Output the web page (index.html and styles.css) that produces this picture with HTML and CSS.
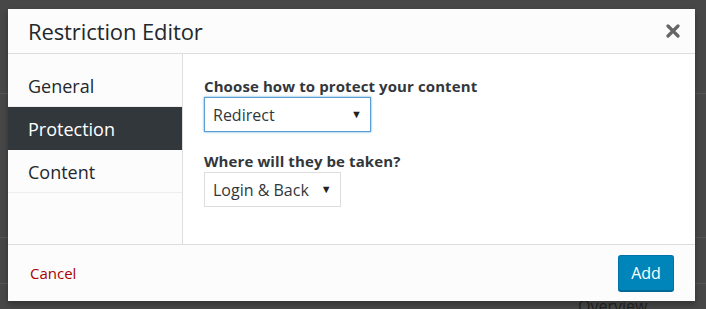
FILE: index.html
```html
<!DOCTYPE html>
<html>
	<head>
		<meta charset="UTF-8">
		<title>Restriction Editor</title>
		<link rel="stylesheet" href="styles.css">
	</head>
	<body>
		<div class="backdrop">
			<div class="bg-line line-1"></div>
			<div class="bg-line line-2"></div>
			<div class="bg-line line-3"></div>
			<span class="bg-text">Overview</span>
		</div>
		<div class="modal">
			<div class="modal-head">
				<h1 class="modal-title">Restriction Editor</h1>
				<svg class="modal-close" width="14" height="14" viewBox="0 0 14 14">
					<path d="M2 2 L12 12 M12 2 L2 12" stroke="#666" stroke-width="3.2" stroke-linecap="round"/>
				</svg>
			</div>
			<div class="modal-body">
				<ul class="tabs">
					<li class="tab">General</li>
					<li class="tab active">Protection</li>
					<li class="tab">Content</li>
				</ul>
				<div class="panel">
					<div class="field">
						<label class="field-label">Choose how to protect your content</label>
						<div class="select select-focus">
							<span>Redirect</span>
							<span class="arrow">&#9660;</span>
						</div>
					</div>
					<div class="field">
						<label class="field-label">Where will they be taken?</label>
						<div class="select">
							<span>Login &amp; Back</span>
							<span class="arrow">&#9660;</span>
						</div>
					</div>
				</div>
			</div>
			<div class="modal-foot">
				<a class="cancel">Cancel</a>
				<span class="btn-add">Add</span>
			</div>
		</div>
	</body>
</html>
```

FILE: styles.css
```css
* {
	padding: 0;
	margin: 0;
	box-sizing: border-box;
}
html,body {
	height: 100%;
}
body {
	background: #474747;
	font-family: "Open Sans", "Noto Sans", sans-serif;
	color: #23282d;
	overflow: hidden;
	position: relative;
	padding: 9px 0 0 8px;
}
/*背景里的页面*/
.backdrop {
	position: absolute;
	left: 0;
	top: 0;
	width: 100%;
	height: 100%;
}
.bg-line {
	position: absolute;
	left: 0;
	width: 100%;
	height: 1px;
	background: #555;
}
.line-1 { top: 93px; }
.line-2 { top: 237px; }
.line-3 { top: 283px; }
.bg-text {
	position: absolute;
	left: 578px;
	top: 295px;
	font-size: 16px;
	color: #222;
}
.modal {
	position: relative;
	width: 687px;
	height: 292px;
	background: #fff;
	display: flex;
	flex-direction: column;
	box-shadow: 0 3px 6px rgba(0,0,0,0.3);
}
.modal-head {
	height: 45px;
	background: #fcfcfc;
	border-bottom: 1px solid #ddd;
	display: flex;
	align-items: center;
	justify-content: space-between;
	padding: 0 15px 0 20px;
}
.modal-title {
	font-size: 22px;
	font-weight: 400;
	letter-spacing: -0.1px;
	margin-top: -1px;
}
.modal-close {
	display: block;
	margin-top: -1px;
}
.modal-body {
	flex: 1;
	display: flex;
	border-bottom: 1px solid #ddd;
}
.tabs {
	list-style: none;
	width: 175px;
	background: #fcfcfc;
	border-right: 1px solid #ddd;
	padding-top: 10px;
}
.tab {
	height: 43px;
	line-height: 44px;
	border-bottom: 1px solid #eee;
	padding-left: 20px;
	font-size: 18px;
	color: #23282d;
}
.tab.active {
	background: #32373c;
	color: #fff;
	border-bottom-color: #32373c;
}
.panel {
	flex: 1;
	padding: 22px 20px 0 21px;
}
.field {
	margin-bottom: 19px;
}
.field-label {
	display: block;
	font-size: 15px;
	font-weight: bold;
	color: #32373c;
	line-height: 20px;
	margin-bottom: 1px;
	letter-spacing: 0.1px;
}
.select {
	display: inline-flex;
	align-items: center;
	justify-content: space-between;
	height: 35px;
	border: 1px solid #ddd;
	padding: 0 8px 0 8px;
	font-size: 16px;
	color: #32373c;
	background: #fff;
}
.select-focus {
	width: 167px;
	border-color: #5b9dd9;
	box-shadow: 0 0 2px rgba(30,140,190,0.8);
}
.arrow {
	font-size: 11px;
	color: #222;
	margin-left: 12px;
	margin-top: -2px;
}
.modal-foot {
	height: 56px;
	background: #fcfcfc;
	display: flex;
	align-items: center;
	justify-content: space-between;
	padding: 0 21px 0 22px;
}
.cancel {
	font-size: 15px;
	color: #a00;
	cursor: pointer;
}
.btn-add {
	display: inline-block;
	width: 56px;
	height: 36px;
	line-height: 34px;
	text-align: center;
	background: #0085ba;
	border: 1px solid #0073aa;
	border-bottom-color: #006799;
	box-shadow: 0 1px 0 #006799;
	border-radius: 3px;
	color: #fff;
	font-size: 16px;
	cursor: pointer;
}
```
